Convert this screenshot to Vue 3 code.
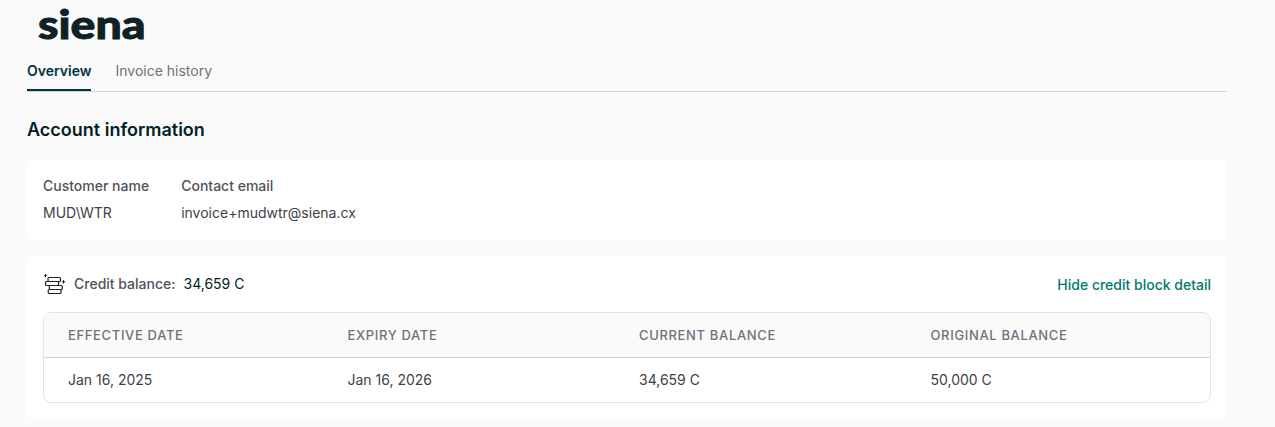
<script setup>
import { ref } from "vue";

const tabs = ["Overview", "Invoice history"];
const activeTab = ref("Overview");
const showBlocks = ref(true);

const account = [
  { label: "Customer name", value: "MUD\\WTR" },
  { label: "Contact email", value: "invoice+mudwtr@siena.cx" },
];

const columns = ["Effective date", "Expiry date", "Current balance", "Original balance"];

const blocks = [["Jan 16, 2025", "Jan 16, 2026", "34,659 C", "50,000 C"]];
</script>

<template>
  <main class="portal">
    <svg class="logo" width="120" height="48" viewBox="0 0 120 48" role="img" aria-label="siena">
      <text x="11" y="39" textLength="107.5" lengthAdjust="spacingAndGlyphs">siena</text>
    </svg>

    <nav class="tabs">
      <button
        v-for="tab in tabs"
        :key="tab"
        class="tab"
        :class="{ active: tab === activeTab }"
        @click="activeTab = tab"
      >
        {{ tab }}
      </button>
    </nav>

    <h2 class="title">Account information</h2>

    <section class="card account">
      <div v-for="item in account" :key="item.label">
        <div class="label">{{ item.label }}</div>
        <div class="value">{{ item.value }}</div>
      </div>
    </section>

    <section class="card credits">
      <div class="credit-head">
        <svg class="coins" width="24" height="22" viewBox="0 0 24 22" fill="none" stroke="#222" stroke-width="1.2">
          <rect x="5" y="4.5" width="12.5" height="4" rx="1" />
          <rect x="2.5" y="8.5" width="13" height="4" rx="1" />
          <rect x="6.3" y="12.5" width="13" height="4" rx="1" />
          <rect x="5.2" y="16.5" width="12.8" height="4" rx="1" />
          <path d="M2.5 1v3.4M0.8 2.7h3.4M20.5 7.1v3.4M18.8 8.8h3.4" stroke-width="1" />
        </svg>
        <span class="label">Credit balance:</span>
        <span class="amount">34,659 C</span>
        <button class="toggle" @click="showBlocks = !showBlocks">
          {{ showBlocks ? "Hide" : "Show" }} credit block detail
        </button>
      </div>

      <div v-if="showBlocks" class="table">
        <div class="row head">
          <div v-for="column in columns" :key="column" class="cell">{{ column }}</div>
        </div>
        <div v-for="(block, i) in blocks" :key="i" class="row">
          <div v-for="(cell, j) in block" :key="j" class="cell">{{ cell }}</div>
        </div>
      </div>
    </section>
  </main>
</template>

<style>
body {
  background: #fafafa;
}
</style>

<style scoped>
.portal {
  width: 1200px;
  height: 427px;
  margin-left: 27px;
  overflow: hidden;
  font-family: Inter, "Liberation Sans", sans-serif;
  font-size: 14px;
  line-height: 20px;
  color: #3f3f46;
}
button {
  padding: 0;
  border: 0;
  background: none;
  font: inherit;
  cursor: pointer;
}
.logo {
  display: block;
}
.logo text {
  font-family: Lato, Inter, sans-serif;
  font-size: 40px;
  font-weight: 900;
  fill: #0e2125;
  stroke: #0e2125;
  stroke-width: 0.9px;
}
.tabs {
  display: flex;
  gap: 24px;
  height: 43px;
  border-bottom: 1px solid #d4d4d8;
}
.tab {
  height: 43px;
  padding-top: 4px;
  box-sizing: border-box;
  border-bottom: 2px solid transparent;
  color: #71717a;
}
.tab.active {
  border-bottom-color: #003540;
  color: #003540;
  font-weight: 600;
}
.title {
  margin: 24px 0 16px;
  font-size: 18px;
  font-weight: 600;
  line-height: 28px;
  color: #021f26;
}
.card {
  box-sizing: border-box;
  padding: 16px;
  border-radius: 6px;
  background: #fff;
}
.account {
  display: flex;
  gap: 32px;
  height: 80px;
}
.label {
  font-weight: 500;
  color: #52525b;
}
.value {
  margin-top: 7px;
}
.credits {
  height: 163px;
  margin-top: 16px;
}
.credit-head {
  display: flex;
  align-items: center;
  height: 24px;
}
.coins {
  margin-right: 7px;
}
.amount {
  margin-left: 8px;
  color: #021f26;
}
.toggle {
  margin-left: auto;
  padding-top: 2px;
  font-weight: 500;
  color: #007a6e;
}
.table {
  margin-top: 16px;
  border: 1px solid #e4e4e7;
  border-radius: 8px;
  overflow: hidden;
}
.row {
  display: grid;
  grid-template-columns: repeat(4, 1fr);
  height: 44px;
  align-items: center;
}
.row.head {
  border-bottom: 1px solid #d4d4d8;
  background: #fafafa;
  color: #71717a;
  font-size: 13px;
  font-weight: 500;
  letter-spacing: 0.65px;
  text-transform: uppercase;
}
.cell {
  padding: 0 12px;
}
.cell:first-child {
  padding-left: 24px;
}
</style>
